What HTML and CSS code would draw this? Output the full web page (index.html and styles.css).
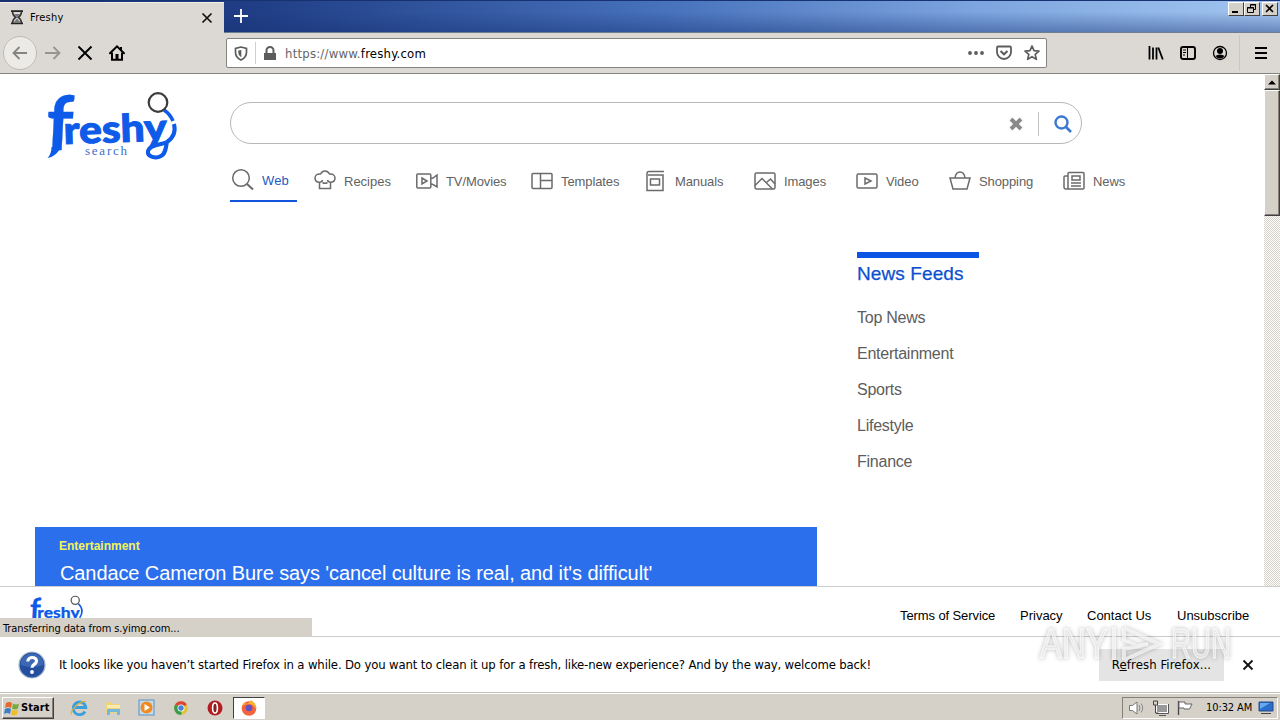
FILE: index.html
```html
<!DOCTYPE html>
<html lang="en">
<head>
<meta charset="utf-8">
<title>Freshy</title>
<link rel="stylesheet" href="styles.css">
</head>
<body>
<div class="screen">
  <header class="titlebar">
    <div class="tab">
      <svg class="tab-icon" width="14" height="15" viewBox="0 0 14 15"><path d="M1 1.2h12M1 13.4h12" stroke="#222" stroke-width="1.8"/><path d="M2.500 1.500c0 3 1.200 4.500 3.200 5.800-2 1.300-3.200 3-3.200 5.700M11.500 1.500c0 3-1.200 4.500-3.200 5.800 2 1.300 3.200 3 3.200 5.700" fill="none" stroke="#333" stroke-width="1.500"/><path d="M4 4h6L7 7.500zM3.500 12.500L7 8.500l3.500 4z" fill="#777"/></svg>
      <span class="tab-title">Freshy</span>
      <svg class="tab-close" width="12" height="12" viewBox="0 0 12 12"><path d="M1.500 1.500l9 9M10.500 1.500l-9 9" stroke="#111" stroke-width="1.700"/></svg>
    </div>
    <svg class="new-tab" width="16" height="16" viewBox="0 0 16 16"><path d="M8 1v14M1 8h14" stroke="#fff" stroke-width="1.800"/></svg>
    <div class="window-buttons">
      <span class="win-btn"><svg width="14" height="12" viewBox="0 0 14 12"><path d="M3 9h6" stroke="#000" stroke-width="2"/></svg></span>
      <span class="win-btn"><svg width="14" height="12" viewBox="0 0 14 12"><path d="M5.500 4V1.500h5v5H8.500M5 2h6M2.500 4.500h6v5h-6zM2 5h7" fill="none" stroke="#000"/></svg></span>
      <span class="win-btn win-close"><svg width="14" height="12" viewBox="0 0 14 12"><path d="M3 2l7 7M10 2L3 9" stroke="#000" stroke-width="1.600"/></svg></span>
    </div>
  </header>

  <div class="toolbar">
    <div class="nav-buttons">
      <span class="back"><svg width="16" height="16" viewBox="0 0 16 16"><path d="M15 8H1.500M7.500 2l-6 6 6 6" fill="none" stroke="#858482" stroke-width="1.800"/></svg></span>
      <svg width="16" height="16" viewBox="0 0 16 16"><path d="M0 8h14.500M8.500 2l6 6-6 6" fill="none" stroke="#969592" stroke-width="1.800"/></svg>
      <svg width="16" height="16" viewBox="0 0 16 16"><path d="M1.500 1.500l13 13M14.500 1.500l-13 13" stroke="#000" stroke-width="1.900"/></svg>
      <svg width="16" height="16" viewBox="0 0 16 16"><path d="M1 8.200L8 1.300l7 6.900" fill="none" stroke="#000" stroke-width="2" stroke-linecap="round"/><path d="M3 7.500v7.200h10V7.500M12 2v3" fill="none" stroke="#000" stroke-width="2"/><path d="M6.500 9h3v5h-3z"/></svg>
    </div>
    <div class="urlbar">
      <svg class="shield" width="14" height="15" viewBox="0 0 14 15"><path d="M7 1L1.500 2.300v4c0 3.500 2 6.200 5.500 7.700 3.500-1.500 5.500-4.200 5.500-7.700v-4z" fill="none" stroke="#5c5c5c" stroke-width="1.700"/><path d="M7.300 4L4.300 4.600v2c0 2 1.200 3.500 3 4.700z" fill="#5c5c5c"/></svg>
      <span class="url-divider"></span>
      <svg class="lock" width="12" height="15" viewBox="0 0 12 15"><path d="M0 7h12v7H0z" fill="#5c5c5c"/><path d="M2.500 8V4.500a3.500 3.500 0 0 1 7 0V8" fill="none" stroke="#5c5c5c" stroke-width="2"/></svg>
      <span class="url"><span class="scheme">https://www.</span>freshy.com</span>
      <span class="url-actions">
        <svg width="16" height="16" viewBox="0 0 16 16"><g fill="#5c5c5c"><circle cx="2" cy="8" r="1.900"/><circle cx="8" cy="8" r="1.900"/><circle cx="14" cy="8" r="1.900"/></g></svg>
        <svg width="16" height="16" viewBox="0 0 16 16"><path d="M2 1.500h12q1 0 1 1V7A7 7 0 0 1 1 7V2.500q0-1 1-1z" fill="none" stroke="#5c5c5c" stroke-width="1.800"/><path d="M4.500 6L8 9.300 11.500 6" fill="none" stroke="#5c5c5c" stroke-width="2"/></svg>
        <svg width="16" height="16" viewBox="0 0 16 16"><path d="M8 1l2 4.700 5 .4-3.800 3.300 1.200 5L8 11.700l-4.400 2.700 1.200-5L1 6.100l5-.4z" fill="none" stroke="#5c5c5c" stroke-width="1.700" stroke-linejoin="round"/></svg>
      </span>
    </div>
    <div class="tools">
      <svg width="16" height="16" viewBox="0 0 16 16"><path d="M1.500 1v13.500M5 2.500v12M8.500 2.500v12M10.300 2.500l4.500 12" stroke="#000" stroke-width="1.800"/></svg>
      <svg width="16" height="16" viewBox="0 0 16 16"><rect x="1" y="2" width="14" height="12" rx="2" fill="none" stroke="#000" stroke-width="1.900"/><path d="M7.500 2v12M3 5h3M3 7.500h3M3 10h2" stroke="#000"/></svg>
      <svg width="16" height="16" viewBox="0 0 16 16"><circle cx="8" cy="8" r="6.500" fill="none" stroke="#000" stroke-width="1.300"/><circle cx="8" cy="6" r="3"/><path d="M3.500 11q1.500-1.500 4.500-1.500t4.500 1.500Q11 13.500 8 13.500T3.500 11z"/></svg>
    </div>
    <svg class="menu" width="12" height="14" viewBox="0 0 12 14"><path d="M0 2h12M0 7h12M0 12h12" stroke="#000" stroke-width="1.800"/></svg>
  </div>

  <main class="viewport">
    <div class="page">
      <div class="page-top">
        <svg class="logo" width="140" height="76" viewBox="40 88 140 76">
          <g fill="#0d5be8" stroke="#0d5be8">
            <text class="logo-f" x="0" y="0" stroke-width=".3" transform="translate(45 150) skewX(-3)">f</text>
            <text class="logo-word" x="64" y="144" stroke-width="1" textLength="103" lengthAdjust="spacingAndGlyphs" transform="rotate(-2 66 144)">reshy</text>
          </g>
          <path d="M60.500 147q-3 9-13 11 4-4 4-11z" fill="#0d5be8"/>
          <path d="M164 110q6 4 9 11" fill="none" stroke="#0d5be8" stroke-width="3.500"/>
          <path d="M174 124c2 8-1 14-7 18-5 3-17 2-19 9-1 6 8 8 13 5 4-2 5-7 6-15" fill="none" stroke="#0d5be8" stroke-width="4"/>
          <circle cx="158" cy="102.500" r="9.300" fill="#fff" stroke="#3c3c40" stroke-width="2.200"/>
          <text class="logo-sub" x="85" y="155" textLength="42">search</text>
        </svg>
        <div class="search-area">
          <div class="searchbox">
            <svg width="14" height="14" viewBox="0 0 14 14"><path d="M2 2l10 10M12 2L2 12" stroke="#8a8a8a" stroke-width="4"/></svg>
            <span class="search-divider"></span>
            <svg width="18" height="18" viewBox="0 0 18 18"><circle cx="7.500" cy="7.500" r="6" fill="none" stroke="#3a78d4" stroke-width="2.400"/><path d="M12 12l5 5" stroke="#3a78d4" stroke-width="2.600"/></svg>
          </div>
          <nav class="categories">
            <a class="cat web"><svg width="22" height="22" viewBox="0 0 22 22"><circle cx="9" cy="9" r="8.300"/><path d="M15 15l6 5.500" stroke-width="2"/></svg>Web</a>
            <a class="cat recipes"><svg width="22" height="22" viewBox="0 0 22 22"><path d="M5.500 18.500h11v-6.300c3 0 4.500-1.900 4.500-4.200 0-2.800-2.500-4.500-5.500-4C14.500 2 13 1 11 1S7.500 2 6.500 4C3.500 3.500 1 5.200 1 8c0 2.300 1.500 4.200 4.500 4.200zM5.500 12.200q2.500 0 3-2.200M16.500 12.200q-2.500 0-3-2.200M8.500 12.500q2.500 1.500 5 0"/></svg>Recipes</a>
            <a class="cat movies"><svg width="22" height="22" viewBox="0 0 22 22"><rect x=".8" y="4" width="14" height="14" rx="1"/><path d="M6 8l5 3-5 3zM15 8.500l2-.5 4-3v12l-4-2.500-2-.5"/></svg>TV/Movies</a>
            <a class="cat templates"><svg width="22" height="22" viewBox="0 0 22 22"><rect x="1" y="3.500" width="20" height="15" rx="1"/><path d="M9.500 3.500v15M9.500 10.500H21"/></svg>Templates</a>
            <a class="cat manuals"><svg width="22" height="22" viewBox="0 0 22 22"><path d="M19 1.500H4q-2 0-2 2v17h16V5H3M5.500 9h9v6h-9z"/></svg>Manuals</a>
            <a class="cat images"><svg width="22" height="22" viewBox="0 0 22 22"><rect x="1" y="3" width="20" height="16" rx="1.500"/><path d="M1 15.500L8 8.500l10.500 10.500M12.500 12.500l4-3.500 4.500 5"/></svg>Images</a>
            <a class="cat video"><svg width="22" height="22" viewBox="0 0 22 22"><rect x="1" y="4" width="20" height="14" rx="1.500"/><path d="M9 8l6 3-6 3z"/></svg>Video</a>
            <a class="cat shopping"><svg width="22" height="22" viewBox="0 0 22 22"><path d="M1 8h20l-3 11H4zM6 8c1-8 9-8 10 0"/></svg>Shopping</a>
            <a class="cat news"><svg width="22" height="22" viewBox="0 0 22 22"><path d="M5 19V3.500q0-1 1-1h14q1 0 1 1V18q0 1-1 1H3q-2 0-2-2V7q0-1 1-1h3M9 6h8v4H9zM8 13h10M8 16h10"/></svg>News</a>
          </nav>
        </div>
      </div>
      <div class="page-main">
        <section class="story">
          <div class="story-tag">Entertainment</div>
          <div class="story-title">Candace Cameron Bure says 'cancel culture is real, and it's difficult'</div>
        </section>
        <aside class="feeds">
          <h2 class="feeds-title">News Feeds</h2>
          <ul class="feed-list">
            <li class="feed">Top News</li>
            <li class="feed">Entertainment</li>
            <li class="feed">Sports</li>
            <li class="feed">Lifestyle</li>
            <li class="feed">Finance</li>
          </ul>
        </aside>
      </div>
    </div>
    <div class="scrollbar">
      <div class="scroll-up"><svg width="8" height="5" viewBox="0 0 8 5"><path d="M0 4.500L4 .5l4 4z"/></svg></div>
      <div class="scroll-thumb"></div>
    </div>
  </main>

  <footer class="footer">
    <svg class="footer-logo" width="57" height="31" viewBox="40 88 140 76">
      <g fill="#0d5be8" stroke="#0d5be8">
        <text class="logo-f" x="0" y="0" stroke-width=".3" transform="translate(43 150) skewX(-3)">f</text>
        <text class="logo-word" x="63" y="144" stroke-width=".5" textLength="104" lengthAdjust="spacingAndGlyphs">reshy</text>
      </g>
      <path d="M164 110q16 14 3 34" fill="none" stroke="#0d5be8" stroke-width="4"/>
      <circle cx="156" cy="101" r="10" fill="#fff" stroke="#555" stroke-width="3"/>
    </svg>
    <nav class="footer-links">
      <a class="terms">Terms of Service</a><a class="privacy">Privacy</a><a class="contact">Contact Us</a><a class="unsub">Unsubscribe</a>
    </nav>
    <div class="status">Transferring data from s.yimg.com...</div>
  </footer>

  <div class="notice">
    <svg class="question" width="28" height="28" viewBox="0 0 28 28"><circle cx="14" cy="14" r="13" fill="#244f9f" stroke="#a7b7cf" stroke-width="1.200"/><path d="M2.500 14a11.500 11.500 0 0 1 23 0q-11 4-23 0z" fill="#3d68b4"/><path d="M9.800 10.500c.3-5.500 9-5 8.700-.4-.2 3.400-4.500 3.200-4.500 6.700" fill="none" stroke="#fff" stroke-width="3.200"/><circle cx="14" cy="21" r="1.900" fill="#fff"/></svg>
    <span class="notice-text">It looks like you haven’t started Firefox in a while. Do you want to clean it up for a fresh, like-new experience? And by the way, welcome back!</span>
    <span class="refresh"><span>R<u>e</u>fresh Firefox...</span></span>
    <svg class="notice-close" width="12" height="12" viewBox="0 0 12 12"><path d="M1.500 1.500l9 9M10.500 1.500l-9 9" stroke="#111" stroke-width="1.800"/></svg>
    <svg class="watermark" width="200" height="60" viewBox="0 0 200 60">
      <text x="4" y="42" textLength="68" lengthAdjust="spacingAndGlyphs">ANY</text>
      <path d="M78 11v33M88 12l35 16-35 16M88 12v12l12 5M88 44V33l24-5"/>
      <text x="135" y="42" textLength="60" lengthAdjust="spacingAndGlyphs">RUN</text>
    </svg>
  </div>

  <div class="taskbar">
    <div class="start"><svg width="16" height="16" viewBox="0 0 16 16"><path d="M2 3q3-2 6 0L7 8Q4 6 1 8z" fill="#e8682c"/><path d="M9 3.500q3 2 6 0l-1 5q-3 2-6 0z" fill="#75ac3d"/><path d="M1 9q3-2 6 0l-1 5q-3-2-6 0z" fill="#3b7fc4"/><path d="M8 9.500q3 2 6 0l-1 5q-3 2-6 0z" fill="#f0bd28"/></svg><span>Start</span></div>
    <div class="apps">
      <svg width="18" height="18" viewBox="0 0 18 18"><path d="M15 12.500a6.300 6.300 0 1 1 .8-4H5" fill="none" stroke="#3b9fdb" stroke-width="2.800"/><path d="M1.500 15.500C-1 12 11 1 16 2.500" fill="none" stroke="#e1b33c" stroke-width="1.300"/></svg>
      <svg width="18" height="18" viewBox="0 0 18 18"><path d="M2 3h5l1 2h8v9H2z" fill="#eed57d"/><path d="M3 6h13v3H3z" fill="#f8ebac"/><path d="M3 16v-5q0-1 1-1h11q1 0 1 1v5h-3v-3H6v3z" fill="#76b8dc"/></svg>
      <svg width="18" height="18" viewBox="0 0 18 18"><rect x="1" y="1" width="15" height="15" fill="#c4daed" stroke="#6c9dc7" stroke-width="1.200"/><circle cx="8.500" cy="8.500" r="6" fill="#ef8b22"/><path d="M6.500 5l5.500 3.500-5.500 3.500z" fill="#fff"/></svg>
      <svg width="18" height="18" viewBox="0 0 18 18"><circle cx="9" cy="9" r="6.800" fill="#e2c337"/><path d="M9 9L3.100 5.600a6.800 6.800 0 0 1 11.800 0z" fill="#d94536"/><path d="M9 9l.5 6.800A6.800 6.800 0 0 1 3.100 5.600z" fill="#399b4b"/><circle cx="9" cy="9" r="3.500" fill="#fff"/><circle cx="9" cy="9" r="2.700" fill="#4384d8"/></svg>
      <svg width="18" height="18" viewBox="0 0 18 18"><circle cx="9" cy="9" r="7.500" fill="#b51c20"/><ellipse cx="9" cy="9" rx="2.400" ry="5" fill="#842024" stroke="#fff" stroke-width="1.600"/></svg>
      <span class="active-app"><svg width="18" height="18" viewBox="0 0 18 18"><circle cx="9" cy="9.500" r="7.300" fill="#f2653b"/><path d="M2 7q1-3 3-4l1 2q4-1 5-4 6 4 5 9-3-5-7-5-5 0-7 2z" fill="#f9b331"/><circle cx="9" cy="9" r="3.300" fill="#6550c7"/></svg></span>
    </div>
    <div class="tray">
      <svg width="18" height="16" viewBox="0 0 18 16"><path d="M1.500 5.500h3L9 2v12l-4.500-3.500h-3z" fill="#fff" stroke="#777"/><path d="M11 5q2 3 0 6M13 3.500q3.500 4.500 0 9" fill="none" stroke="#888"/></svg>
      <svg width="18" height="16" viewBox="0 0 18 16"><rect x="4.500" y="4.500" width="11" height="8" fill="#999" stroke="#fff"/><path d="M4 13.500h12.500V4M7 15.500h7" fill="none" stroke="#555"/><path d="M1.500 1v4h4V1zM3.500 5v8h3" fill="none" stroke="#444"/></svg>
      <svg width="18" height="16" viewBox="0 0 18 16"><path d="M2.500 1v14" stroke="#444" stroke-width="1.300"/><path d="M3 2h6v2h7l-2.500 5H8V8H3z" fill="#fff" stroke="#666"/></svg>
      <span class="clock">10:32 AM</span>
      <svg class="desktop" width="16" height="14" viewBox="0 0 16 14"><path d="M1 1h14v9H1z" fill="#2a6dcc" stroke="#244b87"/><path d="M2 2h10L2 8z" fill="#67a9ed"/><path d="M3 12.500h10" stroke="#444"/></svg>
    </div>
  </div>
</div>
</body>
</html>
```
FILE: styles.css
```css
* { box-sizing: border-box; }
body { margin: 0; }
svg { display: block; flex: none; overflow: visible; }
.screen { width: 1280px; height: 720px; display: flex; flex-direction: column; overflow: hidden; background: #fff; color: #000; font-family: "DejaVu Sans Condensed", "DejaVu Sans", sans-serif; font-stretch: condensed; font-size: 11px; white-space: nowrap; }

.titlebar { height: 33px; flex: none; display: flex; border-top: 1px solid #173173; border-bottom: 1px solid #6f7d91; background: linear-gradient(180deg, transparent 35%, rgba(23, 48, 115, .42)), linear-gradient(90deg, #18336f 0, #203e86 20%, #4772bc 52%, #7ca4de 76%, #a3c6f0 100%); }
.tab { width: 224px; height: 32px; margin-top: 1px; padding: 0 11px 2px 10px; display: flex; align-items: center; background: #dcd9d5; border-top: 1px solid #f0eee6; }
.tab-title { margin-left: 6px; flex: 1; letter-spacing: .25px; }

.new-tab { margin: 7px 0 0 9px; }
.window-buttons { display: flex; margin: 1px 2px 0 auto; height: 15px; }
.win-btn { width: 16px; height: 14px; background: #d5d1c9; border: 1px solid; border-color: #fff #404040 #404040 #fff; }
.win-close { margin-left: 2px; }

.toolbar { height: 41px; flex: none; display: flex; align-items: center; background: #dcd9d5; border-bottom: 1px solid #858482; }
.nav-buttons { width: 226px; padding-left: 3px; display: flex; align-items: center; gap: 16px; }
.back { width: 34px; height: 34px; margin-right: -8px; border: 1px solid #bdbbb7; border-radius: 50%; background: #eceae7; display: grid; place-items: center; }
.urlbar { width: 821px; height: 30px; border: 1px solid #85837f; border-radius: 2px; background: #fff; display: flex; align-items: center; padding: 0 6px 0 7px; }
.url-divider { width: 1px; height: 22px; margin: 0 8px 0 7px; background: #cfcfcf; }
.url { margin-left: 9px; font-size: 13px; letter-spacing: .22px; flex: 1; }
.scheme { color: #666; }
.url-actions { display: flex; gap: 12px; }
.tools { display: flex; gap: 16px; margin-left: 101px; padding-right: 11px; height: 36px; align-items: center; border-right: 1px solid #cbc8c3; }
.menu { margin-left: 15px; }

.viewport { height: 512px; flex: none; display: flex; overflow: hidden; font-family: "Liberation Sans", Arial, sans-serif; font-stretch: normal; }
.page { width: 1264px; }
.page-top { display: flex; height: 128px; padding-left: 40px; }
.logo { margin-top: 14px; }
.logo-f { font: 700 75px Lato, sans-serif; }
.logo-word { font: 900 38px Lato, sans-serif; }
.logo-sub { font: 13px "Liberation Serif", serif; fill: #3e6fc9; }
.search-area { margin-left: 50px; padding-top: 28px; }
.searchbox { width: 852px; height: 42px; border: 1px solid #b8b8b8; border-radius: 21px; display: flex; align-items: center; justify-content: flex-end; padding: 2px 9px 0 0; }
.search-divider { width: 1px; height: 24px; margin: 0 15px 0 15px; background: #c4c4c4; }
.categories { display: flex; margin-top: 15px; }
.cat { display: flex; height: 43px; align-items: center; gap: 8px; padding: 2px 0 0 2px; font-size: 13px; letter-spacing: -.1px; color: #626262; }
.cat svg { margin-top: -2px; fill: none; stroke: #6b6b6b; stroke-width: 1.500; }
.web { width: 67px; margin-right: 15px; letter-spacing: .1px; color: #235ac0; border-bottom: 2px solid #1454dc; }
.recipes { width: 102px; letter-spacing: 0; }
.movies { width: 115px; }
.templates { width: 114px; }
.manuals { width: 109px; }
.images { width: 102px; }
.video { width: 93px; }
.shopping { width: 114px; }
.page-main { display: flex; padding-left: 35px; }
.story { width: 782px; height: 59px; margin-top: 325px; padding: 12px 24px 0; background: #2b6fec; color: #fff; }
.story-tag { color: #f4f35a; font-size: 12px; line-height: 14px; font-weight: bold; }
.story-title { margin: 9px 0 0 1px; font-size: 20px; line-height: 23px; letter-spacing: -.1px; }
.feeds { width: 122px; margin: 50px 0 0 40px; border-top: 6px solid #0b55e5; }
.feeds-title { margin: 4px 0 0; font-size: 19px; line-height: 24px; font-weight: normal; letter-spacing: .1px; color: #0b4fd0; -webkit-text-stroke: .25px #0b4fd0; }
.feed-list { list-style: none; margin: 14px 0 0; padding: 0; }
.feed { height: 36px; line-height: 36px; font-size: 16px; color: #5d5d5d; letter-spacing: -.25px; }
.scrollbar { width: 16px; background: repeating-conic-gradient(#fff 0 25%, #d5d1c9 0 50%) 0 0 / 2px 2px; }
.scroll-up, .scroll-thumb { background: #d5d1c9; border: 1px solid; border-color: #fff #404040 #404040 #fff; box-shadow: inset -1px -1px #858078; }
.scroll-up { height: 16px; display: grid; place-items: center; }
.scroll-thumb { height: 126px; }

.footer { position: relative; height: 51px; flex: none; display: flex; justify-content: space-between; border-top: 1px solid #ccc; border-bottom: 1px solid #ccc; font-family: "Liberation Sans", Arial, sans-serif; font-stretch: normal; }
.footer-logo { margin: 8px 0 0 28px; }
.footer-links { display: flex; width: 380px; padding-top: 20px; font-size: 13px; line-height: 17px; }
.terms { width: 120px; letter-spacing: -.1px; }
.privacy { width: 67px; }
.contact { width: 90px; }
.status { position: absolute; left: 0; bottom: -1px; width: 312px; height: 19px; padding-left: 3px; background: #d5d1c9; font: 11px/21px "DejaVu Sans Condensed", "DejaVu Sans", sans-serif; font-stretch: condensed; letter-spacing: -.1px; }

.notice { position: relative; height: 55px; flex: none; display: flex; align-items: center; padding-left: 18px; }
.notice-text { width: 1040px; margin-left: 13px; font-size: 13px; letter-spacing: -.15px; }
.refresh { width: 125px; height: 32px; background: #e4e4e4; display: grid; place-items: center; font-size: 13px; letter-spacing: .1px; }
.notice-close { margin-left: 18px; }
.watermark { position: absolute; left: 1036px; top: -21px; fill: rgba(255, 255, 255, .5); stroke: rgba(255, 255, 255, .6); stroke-width: 1.500; filter: drop-shadow(0 0 2px rgba(0, 0, 0, .4)); font: 42px "Liberation Sans", Arial, sans-serif; }
.watermark path { fill: none; stroke: rgba(255, 255, 255, .65); stroke-width: 4; }

.taskbar { height: 28px; flex: none; display: flex; align-items: center; padding: 2px 2px 0; background: #d5d1c9; border-top: 1px solid #c4c1bb; box-shadow: inset 0 1px #fff; }
.start { width: 52px; height: 22px; display: flex; align-items: center; gap: 1px; padding-left: 1px; border: 1px solid; border-color: #fff #404040 #404040 #fff; box-shadow: inset -1px -1px #858078; font-weight: bold; font-size: 11px; letter-spacing: .1px; }
.apps { display: flex; align-items: center; gap: 16px; margin-left: 16px; }
.active-app { width: 32px; height: 22px; margin-left: -7px; display: grid; place-items: center; background: #fff; border: 1px solid; border-color: #404040 #fff #fff #404040; }
.tray { display: flex; align-items: center; margin-left: auto; width: 156px; height: 22px; padding-left: 5px; gap: 6px; border: 1px solid; border-color: #858078 #fff #fff #858078; }
.clock { margin-left: 6px; letter-spacing: -.1px; }
.desktop { margin-left: 0; }
```
